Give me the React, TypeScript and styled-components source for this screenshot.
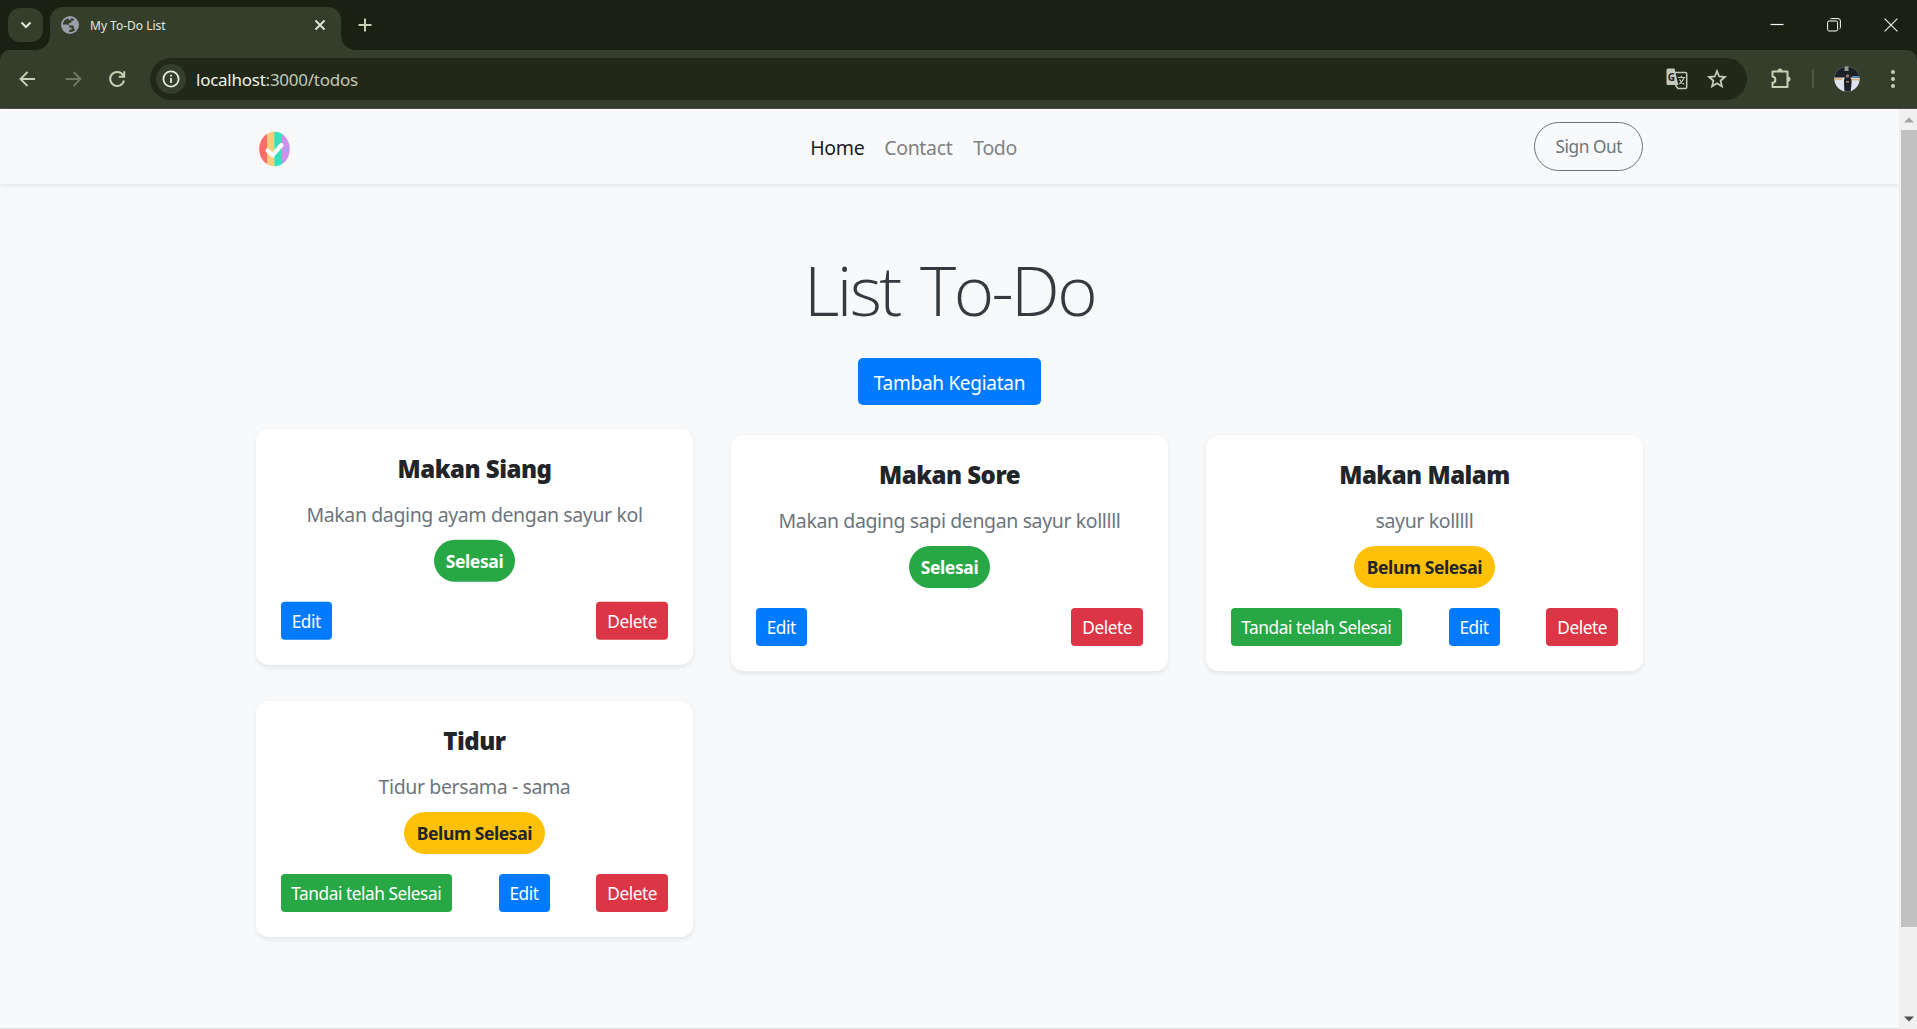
import React from "react";
import styled, { createGlobalStyle, css } from "styled-components";

const Global = createGlobalStyle`
  * { box-sizing: border-box; }
  html, body { margin: 0; padding: 0; }
  body {
    width: 1917px; height: 1029px; overflow: hidden;
    font-family: "Noto Sans", "Open Sans", sans-serif;
    background: #f8f9fb;
  }
  button { font-family: inherit; margin: 0; cursor: pointer; }
`;

const Window = styled.div`
  width: 1917px;
  height: 1029px;
  display: flex;
  flex-direction: column;
`;

/* ---------- browser chrome ---------- */

const TabStrip = styled.header`
  height: 50px;
  flex: none;
  display: flex;
  background: #1a2112;
  padding-left: 8px;
`;

const TabSearch = styled.div`
  width: 35px;
  height: 34px;
  margin-top: 8px;
  border-radius: 12px;
  background: #343e2a;
  display: grid;
  place-items: center;
`;

const Tab = styled.div`
  position: relative;
  width: 291px;
  height: 43px;
  margin: 7px 0 0 7px;
  padding: 0 15px 7px 11px;
  display: flex;
  align-items: center;
  border-radius: 13px 13px 0 0;
  background: #343e2a;

  &::before, &::after {
    content: "";
    position: absolute;
    bottom: 0;
    width: 14px;
    height: 14px;
  }
  &::before {
    left: -14px;
    background: radial-gradient(circle at 0 0, transparent 13.5px, #343e2a 14px);
  }
  &::after {
    right: -14px;
    background: radial-gradient(circle at 100% 0, transparent 13.5px, #343e2a 14px);
  }
`;

const TabTitle = styled.span`
  flex: 1;
  margin-left: 11px;
  padding-top: 1px;
  font-size: 12px;
  line-height: 16px;
  color: #e4e9dc;
`;

const NewTab = styled.div`
  width: 20px;
  margin-left: 14px;
  display: grid;
  place-items: center;
`;

const WindowControls = styled.div`
  margin-left: auto;
  display: flex;
  height: 50px;
  align-items: center;
  gap: 43px;
  padding-right: 19px;
`;

const ToolbarBack = styled.div`
  flex: none;
  height: 59px;
  background: #1a2112;
`;

const Toolbar = styled.div`
  height: 59px;
  display: flex;
  align-items: center;
  padding: 0 16px 1px;
  background: #343e2a;
  border-radius: 10px 10px 0 0;
  border-bottom: 1px solid #4a4c47;
`;

const NavIcons = styled.div`
  display: flex;
  gap: 20.5px;
  width: 134px;
`;

const Address = styled.div`
  width: 1597px;
  height: 42px;
  border-radius: 21px;
  background: #212817;
  display: flex;
  align-items: center;
  padding: 0 19px 0 6px;
`;

const InfoCircle = styled.div`
  width: 30px;
  height: 30px;
  border-radius: 50%;
  background: #343e2a;
  display: grid;
  place-items: center;
`;

const Url = styled.span`
  flex: 1;
  margin-left: 10px;
  padding-top: 2px;
  font-size: 17px;
  line-height: 24px;
  letter-spacing: -0.25px;
  color: #c3c9b8;
  b { font-weight: 400; color: #eef1e8; }
`;

const AddressActions = styled.div`
  display: flex;
  gap: 18px;
`;

const ToolbarRight = styled.div`
  display: flex;
  align-items: center;
  margin-left: 23px;
`;

const Divider = styled.i`
  width: 2px;
  height: 19px;
  margin: 0 20px 0 20px;
  background: #4a5840;
`;

const MenuButton = styled.div`
  display: grid;
  margin: 0 5px 0 auto;
`;

/* ---------- page ---------- */

const Viewport = styled.div`
  flex: 1;
  display: flex;
  min-height: 0;
`;

const Page = styled.div`
  width: 1899px;
  display: flex;
  flex-direction: column;
  background: #f8f9fb;
  border-bottom: 1px solid #dee2e6;
`;

const Navbar = styled.nav`
  height: 75px;
  flex: none;
  display: flex;
  align-items: center;
  padding: 0 255.75px;
  background: #f8f9fb;
  box-shadow: 0 2.5px 5px rgba(0, 0, 0, 0.075);
`;

const Brand = styled.div`
  width: 37px;
  height: 38px;
  margin-top: 5px;
`;

const NavLinks = styled.div`
  display: flex;
  gap: 20px;
  margin-left: 517.5px;
  padding-top: 2px;
`;

const NavLink = styled.a<{ $active?: boolean; $width: number }>`
  width: ${(p) => p.$width}px;
  white-space: nowrap;
  font-size: 19.5px;
  line-height: 30px;
  letter-spacing: -0.35px;
  color: ${(p) => (p.$active ? "#1a1b1c" : "#808183")};
`;

const SignOut = styled.button`
  margin-left: auto;
  width: 109px;
  height: 49px;
  border: 1px solid #6c757d;
  border-radius: 25px;
  background: transparent;
  color: #6c757d;
  font-size: 17.25px;
  line-height: 26px;
  letter-spacing: -0.45px;
  padding: 1px 0 0;
`;

const Heading = styled.h1`
  margin: 59px 0 0;
  height: 93px;
  text-align: center;
  font-family: "Open Sans", "Noto Sans", sans-serif;
  font-size: 69px;
  line-height: 93px;
  font-weight: 300;
  letter-spacing: -2.6px;
  word-spacing: 5px;
  color: #343a40;
`;

const AddButton = styled.button`
  align-self: center;
  width: 183px;
  height: 47px;
  margin-top: 22px;
  border: 0;
  border-radius: 5px;
  background: #007bff;
  color: #fff;
  font-size: 19px;
  line-height: 30px;
  letter-spacing: -0.28px;
  padding: 2px 0 0;
  white-space: nowrap;
`;

const Grid = styled.main`
  display: grid;
  grid-template-columns: repeat(3, 437.5px);
  grid-auto-rows: 236px;
  gap: 30px 37.5px;
  justify-content: center;
  margin-top: 30px;
`;

const Card = styled.article<{ $raised?: boolean }>`
  display: flex;
  flex-direction: column;
  align-items: center;
  padding: 0 25px 25px;
  border-radius: 12.5px;
  background: #fff;
  box-shadow: 0 2.5px 5px rgba(0, 0, 0, 0.075);
  ${(p) => p.$raised && css`transform: translateY(-6.25px);`}
`;

const CardTitle = styled.h5`
  margin: 25px 0 0;
  font-size: 24px;
  line-height: 30px;
  font-weight: 900;
  letter-spacing: -0.5px;
  color: #212529;
`;

const CardText = styled.p`
  margin: 16px 0 0;
  font-size: 19.5px;
  line-height: 30px;
  letter-spacing: -0.38px;
  white-space: nowrap;
  color: #6c757d;
`;

const Badge = styled.span<{ $done?: boolean }>`
  width: ${(p) => (p.$done ? 81 : 141)}px;
  height: 42px;
  margin-top: 10px;
  border-radius: 21px;
  display: grid;
  place-items: center;
  font-size: 17.5px;
  line-height: 24px;
  font-weight: 700;
  letter-spacing: -0.4px;
  white-space: nowrap;
  color: ${(p) => (p.$done ? "#fff" : "#212529")};
  background: ${(p) => (p.$done ? "#28a745" : "#ffc107")};
`;

const Actions = styled.div`
  align-self: stretch;
  display: flex;
  justify-content: space-between;
  margin-top: auto;
`;

const tones = {
  green: { bg: "#28a745", width: 171 },
  blue: { bg: "#007bff", width: 51 },
  red: { bg: "#dc3545", width: 72 },
};

const Action = styled.button<{ $tone: keyof typeof tones }>`
  width: ${(p) => tones[p.$tone].width}px;
  height: 38px;
  padding: 1px 0 0;
  border: 0;
  border-radius: 4px;
  font-size: 17.25px;
  line-height: 26px;
  letter-spacing: -0.45px;
  white-space: nowrap;
  color: #fff;
  background: ${(p) => tones[p.$tone].bg};
`;

const ScrollTrack = styled.aside`
  width: 18px;
  padding-left: 2px;
  display: flex;
  flex-direction: column;
  background: #f0f0f0;
`;

const ScrollArrow = styled.div`
  height: 21px;
  display: grid;
  place-items: center;
`;

const ScrollThumb = styled.div`
  height: 797px;
  margin-bottom: auto;
  background: #c1c1c1;
`;

/* ---------- icons ---------- */

const Chevron = () => (
  <svg width="12" height="8" viewBox="0 0 12 8" fill="none" stroke="#e4e9dc" strokeWidth="2"><path d="M1.500 1.500 6 6l4.500-4.500" /></svg>
);
const Globe = () => (
  <svg width="18" height="18" viewBox="0 0 18 18">
    <circle cx="9" cy="9" r="9" fill="#9a9fa9" />
    <path d="M7.200 2.200C4 3 2 5.600 1.900 8.600h4.300c1 0 2 .8 2 1.900v.9h2.300v2.300H8.300l-.1 2.300c2.500.4 5-.8 6.500-2.800h-1.900v-2.400c0-.9-.6-1.400-1.300-1.400H7.900V6.900h2.300V4.700h1.700c.6 0 1.200-.5 1.300-1.200-.7-.6-1.500-1-2.400-1.300L8 4.500z" fill="#343e2a" />
  </svg>
);
const CloseTab = () => (
  <svg width="12" height="12" viewBox="0 0 12 12" stroke="#e4e9dc" strokeWidth="1.800"><path d="M1.500 1.500l9 9M10.500 1.500l-9 9" /></svg>
);
const Plus = () => (
  <svg width="14" height="14" viewBox="0 0 14 14" stroke="#c5d0b4" strokeWidth="2"><path d="M7 .5v13M.5 7h13" /></svg>
);
const Arrow = ({ dim }: { dim?: boolean }) => (
  <svg width="24" height="24" viewBox="0 0 24 24" fill="none" stroke={dim ? "#6d7761" : "#c5d0b4"} strokeWidth="1.900">
    {dim ? <path d="M4.500 12h14.500M12.500 5l7 7-7 7" /> : <path d="M19 12H5M11.500 5l-7 7 7 7" />}
  </svg>
);
const Reload = () => (
  <svg width="24" height="24" viewBox="0 0 24 24" fill="none" stroke="#c5d0b4" strokeWidth="2"><path d="M18.300 8.500A7 7 0 1 0 19 13.500M19.200 4.300v5.500h-5.500" /></svg>
);
const Info = () => (
  <svg width="18" height="18" viewBox="0 0 18 18" fill="none" stroke="#e4e9dc" strokeWidth="1.800"><circle cx="9" cy="9" r="7.600" /><path d="M9 8v5M9 4.800v1.800" /></svg>
);
const GlyphG = styled.text`
  font: 700 10px "Open Sans", sans-serif;
`;
const Translate = () => (
  <svg width="22" height="22" viewBox="0 0 22 22" fill="none">
    <path d="M8.500 4.500h11a1.200 1.200 0 0 1 1.200 1.200v13.600a1.200 1.200 0 0 1-1.200 1.200h-7.500L9.500 17" stroke="#c6c9be" strokeWidth="1.500" />
    <path d="M2 .5h6.500l3.800 16.500H2A1.500 1.500 0 0 1 .5 15.500V2A1.500 1.500 0 0 1 2 .5z" fill="#c6c9be" />
    <GlyphG x="1.800" y="12.600" fill="#212817">G</GlyphG>
    <path d="M11.800 9.500h7.500M15.300 7.800v1.700M17.800 9.500c-.5 2.800-2.300 5-4.600 6.500M13.500 11.500c1 2 2.500 3.500 4.800 4.700" stroke="#c6c9be" strokeWidth="1.200" />
  </svg>
);
const Star = () => (
  <svg width="22" height="22" viewBox="0 0 22 22" fill="none" stroke="#c6c9be" strokeWidth="1.800"><path d="M11 3.200l2.200 5.300 5.700.5-4.300 3.700 1.300 5.600-4.900-3-4.900 3 1.300-5.600L3.100 9l5.700-.5z" /></svg>
);
const Puzzle = () => (
  <svg width="22" height="22" viewBox="0 0 22 22">
    <path d="M2.500 3.500h15v15.500h-15v-4.200c3.800-.4 3.800-5.900 0-6.300z" fill="none" stroke="#c5d0b4" strokeWidth="2" strokeLinejoin="round" />
    <path d="M7.500 3a2.500 2.500 0 0 1 5 0zM18 8.500a2.500 2.500 0 0 1 0 5z" fill="#c5d0b4" />
  </svg>
);
const Avatar = () => (
  <svg width="26" height="26" viewBox="0 0 26 26">
    <defs><clipPath id="face"><circle cx="13" cy="13" r="12.600" /></clipPath></defs>
    <g clipPath="url(#face)">
      <path fill="#dde2ee" d="M0 0h26v26H0z" />
      <path fill="#1c2027" d="M0 0h26v11.500H0z" />
      <path fill="#8f9a8c" d="M10.500 0h4v5h-4z" />
      <path fill="#d9b98a" d="M0 12h8v2H0zM17 12.500h9v2h-9z" />
      <path fill="#5c86c0" d="M18 10h7v2h-7z" />
      <path fill="#1d1d28" d="M11.500 9.500h4l2 4.500v4l-1 8h-6l-.5-8v-4z" />
      <circle cx="13.500" cy="10" r="1.800" fill="#9a7158" />
      <path fill="#a48a55" d="M12 15h3v1.500h-3z" />
    </g>
  </svg>
);
const Dots = () => (
  <svg width="6" height="20" viewBox="0 0 6 20" fill="#c5d0b4"><circle cx="3" cy="3" r="2" /><circle cx="3" cy="10" r="2" /><circle cx="3" cy="17" r="2" /></svg>
);
const Minimize = () => (
  <svg width="14" height="14" viewBox="0 0 14 14" stroke="#fff" strokeWidth="1.200"><path d="M.5 6.500h13" /></svg>
);
const Restore = () => (
  <svg width="14" height="14" viewBox="0 0 14 14" fill="none" stroke="#fff"><rect x=".6" y="3" width="10" height="10" rx="1.500" /><path d="M3.200 1.200Q3.500.6 4.500.6h6.500q2.400 0 2.400 2.400v6.500q0 1-.8 1.400" /></svg>
);
const CloseWindow = () => (
  <svg width="14" height="14" viewBox="0 0 14 14" stroke="#e9ebe6" strokeWidth="1.200"><path d="M.6.6l12.800 12.800M13.400.6L.6 13.400" /></svg>
);
const Logo = () => (
  <svg width="37" height="38" viewBox="0 0 37 38">
    <defs><clipPath id="oval"><ellipse cx="18.500" cy="19" rx="15.300" ry="17.300" /></clipPath></defs>
    <path fill="#f8f8f8" d="M0 0h37v38H0z" />
    <g clipPath="url(#oval)">
      <path fill="#ff6b6b" d="M0 0h11v38H0z" />
      <path fill="#feca7c" d="M11 0h7.500v38H11z" />
      <path fill="#35e2bd" d="M18.300 0h7.700v38h-7.700z" />
      <path fill="#c994ee" d="M26 0h11v38H26z" />
    </g>
    <path d="M11.500 20.500l5 4.800 9-10.300" fill="none" stroke="#fff" strokeWidth="4.200" strokeLinecap="round" />
  </svg>
);

/* ---------- data ---------- */

const todos = [
  { title: "Makan Siang", text: "Makan daging ayam dengan sayur kol", done: true, raised: true },
  { title: "Makan Sore", text: "Makan daging sapi dengan sayur kolllll", done: true },
  { title: "Makan Malam", text: "sayur kolllll", done: false },
  { title: "Tidur", text: "Tidur bersama - sama", done: false },
];

export default function App() {
  return (
    <Window>
      <Global />
      <TabStrip>
        <TabSearch><Chevron /></TabSearch>
        <Tab>
          <Globe />
          <TabTitle>My To-Do List</TabTitle>
          <CloseTab />
        </Tab>
        <NewTab><Plus /></NewTab>
        <WindowControls><Minimize /><Restore /><CloseWindow /></WindowControls>
      </TabStrip>
      <ToolbarBack>
        <Toolbar>
          <NavIcons><Arrow /><Arrow dim /><Reload /></NavIcons>
          <Address>
            <InfoCircle><Info /></InfoCircle>
            <Url><b>localhost</b>:3000/todos</Url>
            <AddressActions><Translate /><Star /></AddressActions>
          </Address>
          <ToolbarRight><Puzzle /><Divider /><Avatar /></ToolbarRight>
          <MenuButton><Dots /></MenuButton>
        </Toolbar>
      </ToolbarBack>
      <Viewport>
        <Page>
          <Navbar>
            <Brand><Logo /></Brand>
            <NavLinks>
              <NavLink $active $width={54}>Home</NavLink>
              <NavLink $width={69}>Contact</NavLink>
              <NavLink $width={45}>Todo</NavLink>
            </NavLinks>
            <SignOut>Sign Out</SignOut>
          </Navbar>
          <Heading>List To-Do</Heading>
          <AddButton>Tambah Kegiatan</AddButton>
          <Grid>
            {todos.map((t) => (
              <Card key={t.title} $raised={t.raised}>
                <CardTitle>{t.title}</CardTitle>
                <CardText>{t.text}</CardText>
                <Badge $done={t.done}>{t.done ? "Selesai" : "Belum Selesai"}</Badge>
                <Actions>
                  {!t.done && <Action $tone="green">Tandai telah Selesai</Action>}
                  <Action $tone="blue">Edit</Action>
                  <Action $tone="red">Delete</Action>
                </Actions>
              </Card>
            ))}
          </Grid>
        </Page>
        <ScrollTrack>
          <ScrollArrow><svg width="10" height="6" viewBox="0 0 10 6"><path d="M0 5.500 5 .5l5 5z" fill="#a3a3a3" /></svg></ScrollArrow>
          <ScrollThumb />
          <ScrollArrow><svg width="10" height="6" viewBox="0 0 10 6"><path d="M0 .5h10L5 5.500z" fill="#505050" /></svg></ScrollArrow>
        </ScrollTrack>
      </Viewport>
    </Window>
  );
}
